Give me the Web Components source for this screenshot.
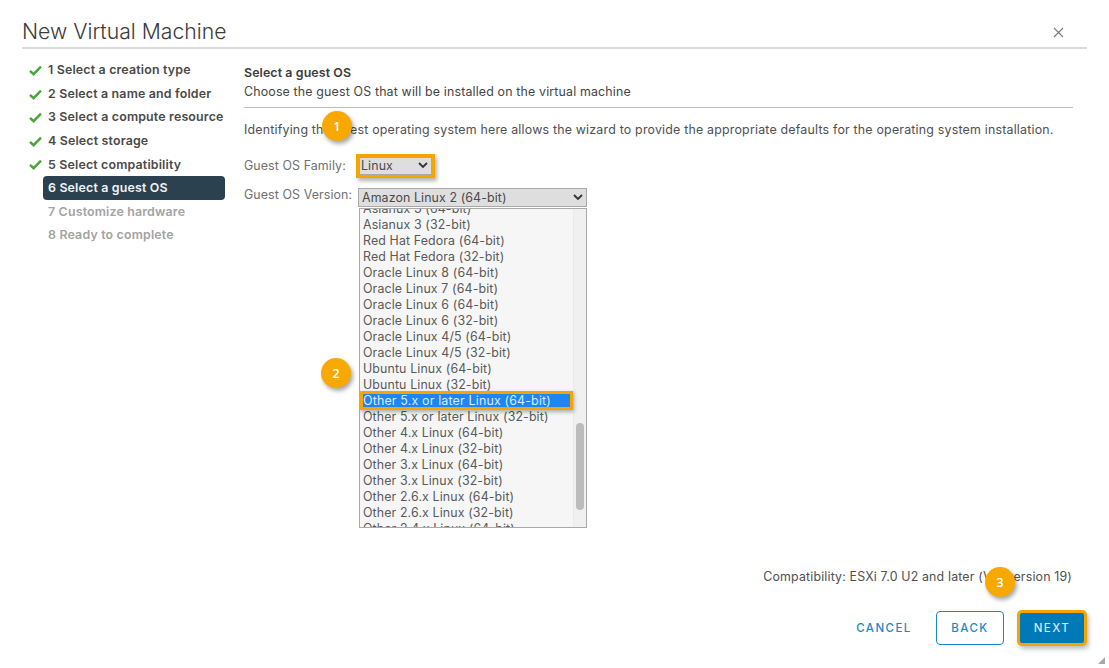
<!DOCTYPE html>
<html><head><meta charset="utf-8"><style>
html,body{margin:0;padding:0;background:#fff;height:668px;overflow:hidden}
body{font-family:Inter,"Noto Sans",sans-serif;color:#565656}
</style></head><body>
<vm-dialog>
<span slot="title">New Virtual Machine</span>
<wizard-steps slot="nav">
<wizard-step state="done">1 Select a creation type</wizard-step>
<wizard-step state="done">2 Select a name and folder</wizard-step>
<wizard-step state="done">3 Select a compute resource</wizard-step>
<wizard-step state="done">4 Select storage</wizard-step>
<wizard-step state="done">5 Select compatibility</wizard-step>
<wizard-step state="active">6 Select a guest OS</wizard-step>
<wizard-step state="todo">7 Customize hardware</wizard-step>
<wizard-step state="todo">8 Ready to complete</wizard-step>
</wizard-steps>
<guest-os-page slot="main"></guest-os-page>
</vm-dialog>
<script>
class VmDialog extends HTMLElement{constructor(){super();this.attachShadow({mode:'open'}).innerHTML=`<style>
:host{display:flex;flex-direction:column;width:1109px;height:668px;box-sizing:border-box;padding:0 22px 0 22px;position:relative}
header{display:flex;justify-content:space-between;align-items:flex-end;height:49px;box-sizing:border-box;border-bottom:2px solid #dcdcdc;padding-bottom:0}
.t{font-size:21.2px;line-height:30px;color:#3a3a3a;font-weight:300;margin-bottom:1px}
svg{display:block;margin:0 23px 9px 0}
.b{display:flex;flex:1;min-height:0;padding-top:9px}
.n{width:203px;padding-left:21px;box-sizing:border-box;flex:none}
.m{flex:1;min-width:0;padding-left:19px;padding-right:14px}
.rz{position:absolute;right:4px;bottom:4px}
</style><header><div class="t"><slot name="title"></slot></div><svg width="11" height="11" viewBox="0 0 11 11"><path d="M1 1l9 9M10 1l-9 9" stroke="#7b7b7b" stroke-width="1.2" fill="none"/></svg></header>
<div class="b"><div class="n"><slot name="nav"></slot></div><div class="m"><slot name="main"></slot></div></div>
<svg class="rz" style="margin:0" width="8" height="8" viewBox="0 0 8 8"><path d="M8 1L1 8h7z" fill="#a8a8a8"/></svg>`}}
class WizardSteps extends HTMLElement{constructor(){super();this.attachShadow({mode:'open'}).innerHTML=`<style>:host{display:flex;flex-direction:column;gap:0}</style><slot></slot>`}}
class WizardStep extends HTMLElement{constructor(){super();const s=this.getAttribute('state');
const c={done:'#4a4a4a',active:'#f0f3f5',todo:'#a3a3a3'}[s];
this.attachShadow({mode:'open'}).innerHTML=`<style>
:host{display:block;height:23.6px;position:relative}
.r{height:23.6px;box-sizing:border-box;display:flex;align-items:center;padding-left:5px;font-size:12.4px;font-weight:600;color:${c};border-radius:4px;${s==='active'?'background:#2b4150;':''}white-space:pre;letter-spacing:.17px}
svg{position:absolute;left:-14px;top:7px}
</style>${s==='done'?'<svg width="13" height="11" viewBox="0 0 13 11"><path d="M1 5.8l3.6 3.4L12 1.6" stroke="#4aa53b" stroke-width="2.4" fill="none"/></svg>':''}<div class="r"><slot></slot></div>`}}
class OrangeBadge extends HTMLElement{constructor(){super();this.attachShadow({mode:'open'}).innerHTML=`<style>
:host{position:absolute;width:30px;height:30px;border-radius:50%;background:#f9a800;color:#fff;font-size:13px;font-weight:600;display:flex;align-items:center;justify-content:center;box-shadow:2px 3px 4px rgba(0,0,0,.35);z-index:5;font-family:"Open Sans",sans-serif}
</style><slot></slot>`}}
class FakeSelect extends HTMLElement{constructor(){super();this.attachShadow({mode:'open'}).innerHTML=`<style>
:host{display:flex;box-sizing:border-box;align-items:center;justify-content:space-between;background:#dedede;border:1px solid #a9a9a9;height:19px;padding:0 3px 0 3px;font-size:12.4px;color:#4a4a4a;letter-spacing:.1px}
svg{display:block}
</style><span><slot></slot></span><svg width="10" height="7" viewBox="0 0 10 7"><path d="M1 1l4 4 4-4" stroke="#333" stroke-width="1.8" fill="none"/></svg>`}}
class OsList extends HTMLElement{constructor(){super();const items=["Asianux 3 (64-bit)","Asianux 3 (32-bit)","Red Hat Fedora (64-bit)","Red Hat Fedora (32-bit)","Oracle Linux 8 (64-bit)","Oracle Linux 7 (64-bit)","Oracle Linux 6 (64-bit)","Oracle Linux 6 (32-bit)","Oracle Linux 4/5 (64-bit)","Oracle Linux 4/5 (32-bit)","Ubuntu Linux (64-bit)","Ubuntu Linux (32-bit)","Other 5.x or later Linux (64-bit)","Other 5.x or later Linux (32-bit)","Other 4.x Linux (64-bit)","Other 4.x Linux (32-bit)","Other 3.x Linux (64-bit)","Other 3.x Linux (32-bit)","Other 2.6.x Linux (64-bit)","Other 2.6.x Linux (32-bit)","Other 2.4.x Linux (64-bit)"];
this.attachShadow({mode:'open'}).innerHTML=`<style>
:host{display:flex;box-sizing:border-box;width:228px;height:320px;border:1px solid #a9a9a9;background:#f6f6f6;overflow:hidden;position:relative}
.l{flex:1;margin-top:-8px;min-width:0}
.o{height:16px;line-height:16px;padding-left:3px;font-size:12.4px;color:#5a5a5a;letter-spacing:.12px;white-space:nowrap;position:relative}
.o.sel{background:#1e86f3;color:#d9ebff;box-shadow:0 0 0 3px #f5a400,1px 2px 4px 3px rgba(0,0,0,.3);height:13px;line-height:13px;margin:1px 3px 2px 3px;padding-left:0;z-index:2;letter-spacing:.18px}
.s{width:13px;flex:none;background:#f0f0f0;position:relative;border-left:1px solid #eaeaea;box-sizing:border-box}
.s i{position:absolute;left:2px;right:2px;top:214px;height:87px;border-radius:5px;background:#bcbcbc}
</style><div class="l">${items.map((t,i)=>`<div class="o${i===12?' sel':''}">${t}</div>`).join('')}</div><div class="s"><i></i></div>`}}
class GuestOsPage extends HTMLElement{constructor(){super();this.attachShadow({mode:'open'}).innerHTML=`<style>
:host{display:block;font-size:12.4px;color:#4f4f4f;letter-spacing:.2px}
.h{font-weight:600;color:#3d3d3d;line-height:19px;margin-top:5px;letter-spacing:.1px}
.sub{line-height:19px;color:#454545;letter-spacing:.16px}
hr{border:0;border-top:1px solid #bdbdbd;margin:6px 0 12px;height:0}
p{margin:0;line-height:19px}
.row{display:flex;margin-top:15px;height:23px;align-items:center}
.row.v{margin-top:11px;height:19px;align-items:flex-start}
label{color:#707070;width:114px;flex:none;line-height:16px;white-space:nowrap;letter-spacing:.1px}
.row.v label{margin-top:-1px}
.fam{width:73px;box-sizing:border-box;margin-left:1px;padding-left:1px;box-shadow:0 0 0 3px #f5a400,2px 3px 4px 3px rgba(0,0,0,.3);height:18px}
.ver{width:229px}
.lst{margin:1px 0 0 115px}
.cp{position:absolute;right:37px;top:569px;color:#505050;line-height:16px;letter-spacing:.16px}
.btns{position:absolute;right:22px;top:611px;display:flex;align-items:center}
button{font:inherit;font-size:11.5px;font-weight:500;letter-spacing:1.45px;height:34px;box-sizing:border-box;border-radius:4px;background:none;border:0;color:#1d87c4;padding:0}
.c{width:76px;margin-right:14px}
.b{width:68px;border:1px solid #1d87c4;margin-right:16px}
.x{width:64px;height:30px;background:#0079b8;color:#d4e8f3;border-radius:2px;box-shadow:0 0 0 3px #f5a400,2px 3px 4px 3px rgba(0,0,0,.25);margin-right:3px}
</style>
<div class="h">Select a guest OS</div><div class="sub">Choose the guest OS that will be installed on the virtual machine</div><hr>
<p>Identifying the guest operating system here allows the wizard to provide the appropriate defaults for the operating system installation.</p>
<div class="row"><label>Guest OS Family:</label><fake-select class="fam">Linux</fake-select></div>
<div class="row v"><label>Guest OS Version:</label><fake-select class="ver">Amazon Linux 2 (64-bit)</fake-select></div>
<os-list class="lst"></os-list>
<div class="cp">Compatibility: ESXi 7.0 U2 and later (VM version 19)</div>
<div class="btns"><button class="c">CANCEL</button><button class="b">BACK</button><button class="x">NEXT</button></div>
<orange-badge style="left:322px;top:111px">1</orange-badge>
<orange-badge style="left:321px;top:358px">2</orange-badge>
<orange-badge style="left:985px;top:567px">3</orange-badge>`}}
customElements.define('fake-select',FakeSelect);customElements.define('os-list',OsList);customElements.define('orange-badge',OrangeBadge);customElements.define('guest-os-page',GuestOsPage);customElements.define('wizard-step',WizardStep);customElements.define('wizard-steps',WizardSteps);customElements.define('vm-dialog',VmDialog);
</script></body></html>
